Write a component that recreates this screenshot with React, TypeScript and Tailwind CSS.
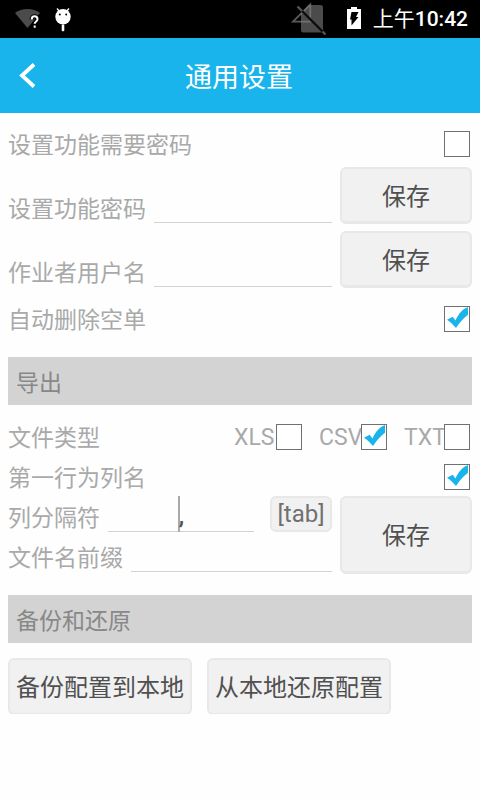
import clsx from "clsx";
import type { ReactNode } from "react";

function WifiUnknownIcon() {
  return (
    <svg width="26" height="22" viewBox="0 0 26 22">
      <path d="M0 5C7-.5 18-.5 25 5L12.5 20z" fill="#4b4b4b" />
      <path
        d="M16.700 11.500c0-4.300 5.800-4 5.800-.3c0 2.300-2.800 2.300-2.800 4.600M19.700 17.500v2.200"
        fill="none"
        stroke="#000"
        strokeWidth="4.200"
      />
      <path
        d="M16.700 11.500c0-4.300 5.800-4 5.800-.3c0 2.300-2.800 2.300-2.800 4.600M19.700 17.500v2.200"
        fill="none"
        stroke="#fff"
        strokeWidth="2"
      />
    </svg>
  );
}

function AndroidIcon() {
  return (
    <svg width="16" height="24" viewBox="0 0 16 24">
      <path d="M2 .5l3 3.500M14 .5l-3 3.500" stroke="#fff" strokeWidth="1.300" />
      <circle cx="8" cy="8.700" r="7.700" fill="#fff" />
      <circle cx="4.800" cy="6.500" r="1" fill="#000" />
      <circle cx="11.200" cy="6.500" r="1" fill="#000" />
      <rect x="6.700" y="16.500" width="2.600" height="6.700" rx="1" fill="#fff" />
    </svg>
  );
}

function NoSimIcon() {
  return (
    <svg width="38" height="36" viewBox="0 0 38 36">
      <path d="M19 5h11.500q2.500 0 2.500 2.500v22.500q0 2.500-2.500 2.500h-17q-2.500 0-2.500-2.500V13z" fill="#4b4b4b" />
      <path d="M20.300 4.500V21.700H3z" fill="none" stroke="#808080" strokeOpacity=".7" strokeWidth="1.800" />
      <path d="M7.500 6.500l28 28" stroke="#555" strokeWidth="2.400" />
      <path d="M12 11l20.500 20.500" stroke="#0c0c0c" strokeWidth="2.400" />
    </svg>
  );
}

function BatteryIcon() {
  return (
    <svg width="14" height="22" viewBox="0 0 14 22">
      <path d="M4 0h6v2h4v20H0V2h4z" fill="#fff" />
      <path d="M4.500 5h7L9 10h2.500L4.500 18.500V12.500H3z" fill="#000" />
    </svg>
  );
}

function Checkbox({ checked }: { checked?: boolean }) {
  return (
    <span className="block size-[26px] shrink-0 border border-[#707070] bg-white">
      {checked && (
        <svg width="24" height="24" viewBox="0 0 24 24">
          <path
            d="M2 12.700L7.700 9.800L10.500 13.500C13 7.500 17.500 2 23 0V7.700C19 10.500 15 15 11 21C8.200 17.600 5.500 15 2 12.700z"
            fill="#1ab4ec"
          />
        </svg>
      )}
    </span>
  );
}

function Button({ className, children }: { className: string; children: ReactNode }) {
  return (
    <button
      className={clsx(
        "shrink-0 whitespace-nowrap rounded-md border-2 border-[#e8e8e8] bg-[#f1f1f1] text-[#505050]",
        className
      )}
    >
      {children}
    </button>
  );
}

function Section({ className, title }: { className: string; title: string }) {
  return (
    <h2
      className={clsx(
        "mx-2 flex h-12 items-center bg-[#d3d3d3] pl-2 pt-1.5 text-[23px] text-[#888]",
        className
      )}
    >
      {title}
    </h2>
  );
}

function PasswordRow({ label }: { label: string }) {
  return (
    <div className="flex h-16 gap-2 px-2">
      <label className="pt-[27px]">{label}</label>
      <div className="h-14 flex-1 border-b border-[#d3d3d3]" />
      <Button className="h-[57px] w-[132px] border-b-[3px] pt-1 text-2xl">保存</Button>
    </div>
  );
}

const fileTypes = [
  { name: "XLS", checked: false, width: "w-[68px]" },
  { name: "CSV", checked: true, width: "w-[68px]" },
  { name: "TXT", checked: false, width: "w-[66px]" },
];

export default function App() {
  return (
    <div className="h-[800px] w-[480px] overflow-hidden bg-[#fefefe] font-[Roboto,'Noto_Sans_CJK_SC',sans-serif] text-[23px] leading-8 text-[#a9a9a9]">
      <div className="flex h-[38px] items-start bg-black pl-[15px] pr-3 text-white">
        <div className="flex gap-[14px] pt-2">
          <WifiUnknownIcon />
          <AndroidIcon />
        </div>
        <div className="ml-auto flex">
          <NoSimIcon />
          <div className="ml-[19px] mr-3 pt-[7px]">
            <BatteryIcon />
          </div>
          <span className="pt-[3px] text-[21px] font-medium">
            <span className="font-normal">上午</span>10:42
          </span>
        </div>
      </div>
      <header className="grid h-[75px] grid-cols-[1fr_auto_1fr] items-center bg-[#1ab4ec] text-[27px] text-white">
        <svg className="ml-[19px]" width="16" height="26" viewBox="0 0 16 26">
          <path d="M15 1.500L3 12.500l12 11" fill="none" stroke="#fff" strokeWidth="3.800" />
        </svg>
        <h1 className="-ml-px mr-px pt-[5px]">通用设置</h1>
      </header>

      <div className="flex h-[54px] items-center justify-between pl-2 pr-2.5 pt-2">
        <label className="pt-1">设置功能需要密码</label>
        <Checkbox />
      </div>
      <PasswordRow label="设置功能密码" />
      <PasswordRow label="作业者用户名" />
      <div className="flex h-12 items-center justify-between pl-2 pr-2.5">
        <label className="pt-1">自动删除空单</label>
        <Checkbox checked />
      </div>

      <Section className="mt-[14px]" title="导出" />
      <div className="mt-3 flex h-10 items-center pl-2 pr-2.5">
        <label className="mr-auto pt-1">文件类型</label>
        <div className="flex gap-[17px]">
          {fileTypes.map((type) => (
            <div key={type.name} className={clsx("flex items-center", type.width)}>
              <span className="w-0 flex-1 whitespace-nowrap pt-0.5">{type.name}</span>
              <Checkbox checked={type.checked} />
            </div>
          ))}
        </div>
      </div>
      <div className="flex h-10 items-center justify-between pl-2 pr-2.5">
        <label className="pt-1">第一行为列名</label>
        <Checkbox checked />
      </div>
      <div className="-mt-px flex gap-2 px-2">
        <div className="flex-1">
          <div className="flex h-10 items-center">
            <label className="pt-1.5">列分隔符</label>
            <div className="mb-1 ml-2 flex h-9 flex-1 justify-center self-end border-b border-[#d3d3d3] text-2xl text-[#505050]">
              <span className="h-9 w-0.5 bg-[#a9a9a9]" />
              <span className="-ml-px pt-1 font-medium">,</span>
            </div>
            <Button className="mb-1 ml-4 h-9 w-[62px] px-0 text-2xl leading-none text-[#707070]">
              [tab]
            </Button>
          </div>
          <div className="flex h-10 items-center">
            <label className="pt-1.5">文件名前缀</label>
            <div className="mb-1 ml-2 h-9 flex-1 border-b border-[#d3d3d3]" />
          </div>
        </div>
        <Button className="h-[78px] w-[132px] border-b-[3px] pt-0.5 text-2xl">保存</Button>
      </div>

      <Section className="mt-[19px]" title="备份和还原" />
      <div className="mt-[15px] flex h-14 gap-[15px] overflow-hidden px-2">
        <Button className="h-[57px] w-[184px] pt-0.5 text-2xl">备份配置到本地</Button>
        <Button className="h-[57px] w-[184px] pt-0.5 text-2xl">从本地还原配置</Button>
      </div>
    </div>
  );
}
